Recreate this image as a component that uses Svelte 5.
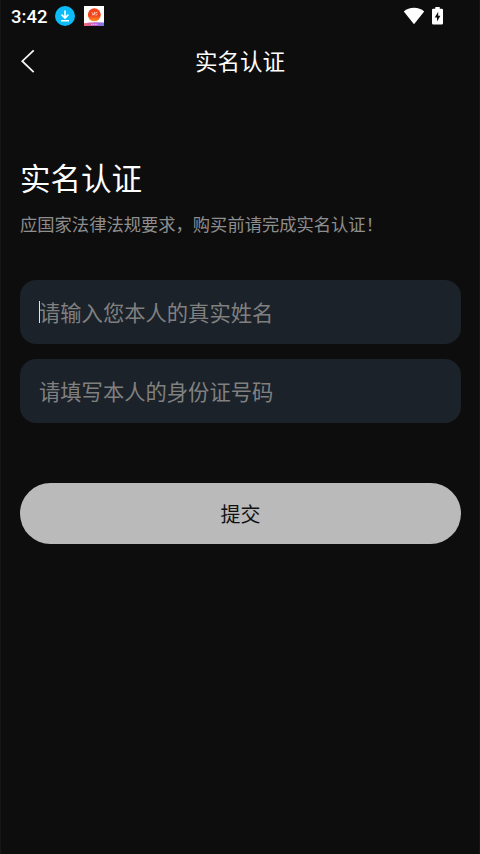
<script lang="ts">
  type Field = {
    name: string;
    placeholder: string;
  };

  const fields: Field[] = [
    { name: 'realName', placeholder: '请输入您本人的真实姓名' },
    { name: 'idNumber', placeholder: '请填写本人的身份证号码' },
  ];

  let focused = $state('realName');
</script>

<div class="screen">
  <div class="status-bar">
    <span class="time">3:42</span>
    <svg class="download" width="20" height="20" viewBox="0 0 20 20">
      <circle cx="10" cy="10" r="10" fill="#0bbcfb" />
      <path d="M10 4.500v7.200M6.600 8.600l3.400 3.400 3.400-3.400M6 14.700h8" fill="none" stroke="#fff" stroke-width="1.600" />
    </svg>
    <svg class="app" width="20" height="20" viewBox="0 0 20 20">
      <defs>
        <linearGradient id="strip" x1="0" x2="1" y1="0" y2="0">
          <stop offset="0" stop-color="#f26a6c" />
          <stop offset="0.5" stop-color="#c757c4" />
          <stop offset="1" stop-color="#6f7df0" />
        </linearGradient>
        <linearGradient id="ball" x1="0" x2="0" y1="0" y2="1">
          <stop offset="0" stop-color="#f5451c" />
          <stop offset="0.55" stop-color="#f2401c" />
          <stop offset="1" stop-color="#ff9a24" />
        </linearGradient>
      </defs>
      <rect width="20" height="20" fill="#fff" />
      <path d="M0 17.200Q10 15.600 20 16.600V20H0z" fill="url(#strip)" />
      <circle cx="10.300" cy="8.800" r="6.500" fill="url(#ball)" />
      <path d="M7.500 6.500l2 1.500M8 9l2-.6M10.500 5.800l-.4 3.400M10.500 7.500l3-1.300M11.500 9.300l2-.8" stroke="#ffd9c4" stroke-width="0.9" />
      <path d="M7 18.300h6.500" stroke="#f7c4ec" stroke-width="1" stroke-dasharray="1.300 .5" />
    </svg>
    <svg class="wifi" width="22" height="18" viewBox="0 0 22 18">
      <path d="M11 17.200L.8 4.400C3.500 2 7 .8 11 .8s7.500 1.200 10.200 3.600z" fill="#fff" />
    </svg>
    <svg class="battery" width="11" height="18" viewBox="0 0 11 18">
      <path d="M3.300 0h4.400v1.800H9.800Q11 1.800 11 3v13.300q0 1.200-1.200 1.200H1.200Q0 17.500 0 16.300V3q0-1.200 1.200-1.200H3.300z" fill="#fff" />
      <path d="M6.200 4.800L2.700 10.500H5v4L8.400 8.800H6.200z" fill="#0d0d0d" />
    </svg>
  </div>

  <header>
    <button class="back" aria-label="返回">
      <svg width="16" height="26" viewBox="0 0 16 26">
        <path d="M13.700 2.300L2.300 13.200l11.400 10.900" fill="none" stroke="#f4f4f4" stroke-width="1.800" />
      </svg>
    </button>
    <span class="title">实名认证</span>
  </header>

  <main>
    <h1>实名认证</h1>
    <p>应国家法律法规要求，购买前请完成实名认证！</p>

    <div class="fields">
      {#each fields as field (field.name)}
        <button class="field" onclick={() => (focused = field.name)}>
          {#if focused === field.name}
            <i class="caret"></i>
          {/if}
          <span>{field.placeholder}</span>
        </button>
      {/each}
    </div>

    <button class="submit">提交</button>
  </main>
</div>

<style>
  :global(body) {
    background: #0d0d0d;
  }

  .screen {
    box-sizing: border-box;
    height: 854px;
    border: solid #171717;
    border-width: 0 1px;
    background: #0d0d0d;
    color: #fff;
    font-family: "Noto Sans CJK SC", sans-serif;
    overflow: hidden;
  }

  button {
    margin: 0;
    padding: 0;
    border: none;
    background: none;
    font: inherit;
    color: inherit;
  }

  svg {
    display: block;
    flex: none;
  }

  .status-bar {
    display: flex;
    align-items: center;
    height: 32px;
    padding: 0 36px 0 10px;
  }

  .time {
    width: 44px;
    padding-top: 1px;
    font: 500 18.500px/32px Roboto, sans-serif;
  }

  .app {
    margin-left: 9px;
  }

  .wifi {
    margin-left: auto;
    margin-right: 7px;
  }

  header {
    display: grid;
    grid-template-columns: 60px 1fr 60px;
    align-items: center;
    height: 58px;
  }

  .back {
    padding-left: 19px;
  }

  .title {
    padding-bottom: 2px;
    font-size: 22.500px;
    line-height: 56px;
    text-align: center;
  }

  main {
    padding: 65px 18px 0 19px;
  }

  h1 {
    margin: 0;
    font-size: 30.500px;
    font-weight: 400;
    line-height: 44px;
  }

  p {
    margin: 12px 0 0;
    font-size: 17.300px;
    line-height: 26px;
    color: #8e8e8e;
    white-space: nowrap;
  }

  .fields {
    display: flex;
    flex-direction: column;
    gap: 15px;
    margin-top: 43px;
  }

  .field {
    position: relative;
    height: 64px;
    padding-left: 19px;
    border-radius: 16px;
    background: #1b2229;
    font-size: 21.300px;
    line-height: 64px;
    text-align: left;
    color: #808080;
  }

  .caret {
    position: absolute;
    left: 18.500px;
    top: 21px;
    width: 1.500px;
    height: 22px;
    background: #e4e4e4;
  }

  .submit {
    width: 100%;
    height: 61px;
    margin-top: 60px;
    border-radius: 31px;
    background: #bababa;
    font-size: 20px;
    line-height: 61px;
    color: #111;
  }
</style>
